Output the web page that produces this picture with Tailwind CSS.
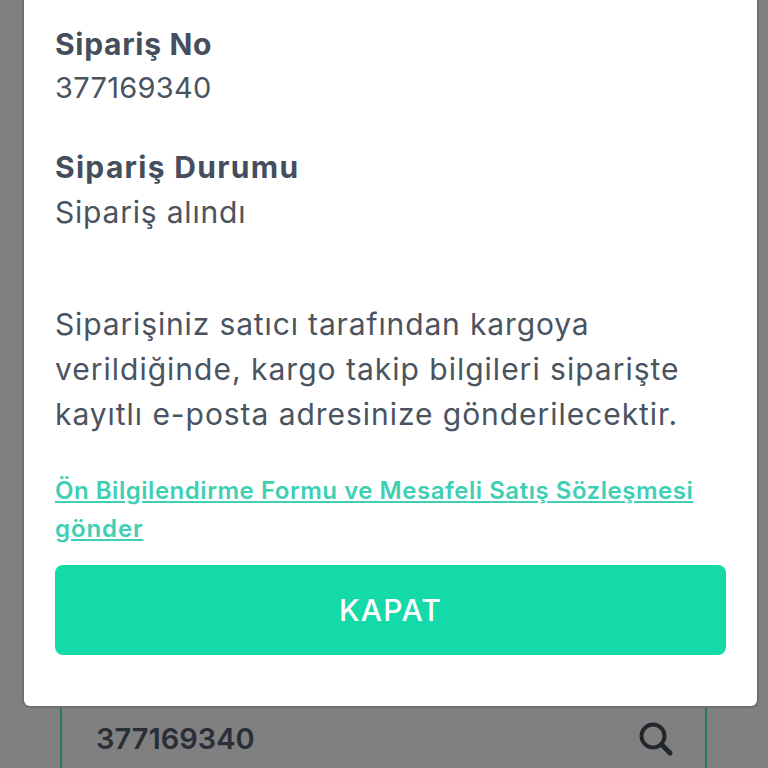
<html>
    <head>
        <meta charset="utf-8" />
        <title>Sipariş</title>
        <script src="https://cdn.jsdelivr.net/npm/@tailwindcss/browser@4"></script>
    </head>
    <body class="w-[768px] h-[768px] overflow-hidden bg-[#808080] font-['Inter',sans-serif]">
        <div class="flex flex-col h-[768px]">
            <!-- modal -->
            <div class="ml-[22px] w-[737px] h-[708px] shrink-0 bg-white rounded-b-[8px] border-b-2 border-x-2 border-[#6f6f6f] pl-[31px] pr-[31px] pt-[22px] text-[#4a5360]">
                <h1 class="text-[30px] leading-[44px] font-bold tracking-[0.7px] text-[#444e5c]">Sipariş No</h1>
                <p class="text-[29px] leading-[44px] tracking-[0.3px]">377169340</p>

                <h1 class="mt-[35px] text-[30px] leading-[44px] font-bold tracking-[1.3px] text-[#444e5c]">Sipariş Durumu</h1>
                <p class="text-[30px] leading-[46px] tracking-[0.8px]">Sipariş alındı</p>

                <p class="mt-[67px] text-[30px] leading-[45px] whitespace-nowrap">
                    <span class="block tracking-[0.86px]">Siparişiniz satıcı tarafından kargoya</span>
                    <span class="block tracking-[1px]">verildiğinde, kargo takip bilgileri siparişte</span>
                    <span class="block tracking-[0.95px]">kayıtlı e-posta adresinize gönderilecektir.</span>
                </p>

                <a class="block mt-[35px] text-[24px] leading-[38px] font-semibold underline text-[#3fcfb4] whitespace-nowrap">
                    <span class="block tracking-[0.53px]">Ön Bilgilendirme Formu ve Mesafeli Satış Sözleşmesi</span>
                    <span class="block tracking-[0.9px]">gönder</span>
                </a>

                <button class="mt-[17px] w-[671px] h-[90px] flex items-center justify-center bg-[#14d9a8] rounded-[8px] text-white text-[30px] font-medium tracking-[1.2px]">KAPAT</button>
            </div>

            <!-- search input behind the modal -->
            <div class="ml-[60px] w-[647px] flex-1 border-x-2 border-[#1f7a66] flex items-center justify-between pl-[34px] pr-[31px] pt-[2px]">
                <span class="text-[29px] font-semibold text-[#2a2e36]">377169340</span>
                <svg class="w-[36px] h-[36px]" viewBox="0 0 36 36" fill="none" stroke="#23282e" stroke-width="4" stroke-linecap="round"><circle cx="15" cy="15" r="11.5"/><path d="M24 24l8 8" stroke-width="5"/></svg>
            </div>
        </div>
    </body>
</html>
